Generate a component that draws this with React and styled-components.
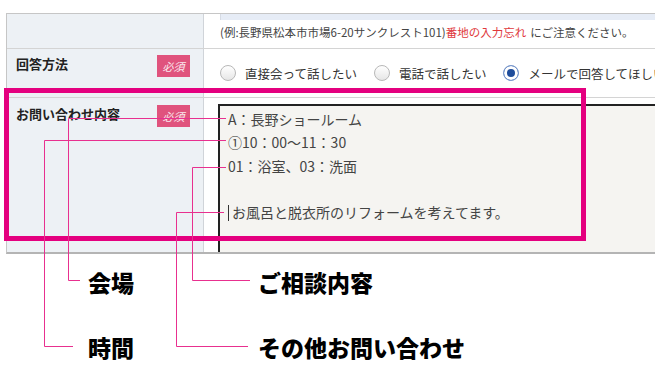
import React from "react";
import styled, { createGlobalStyle } from "styled-components";

const GlobalStyle = createGlobalStyle`
  body {
    margin: 0;
    background: #ffffff;
    font-family: "Noto Sans CJK JP", "Noto Sans", sans-serif;
  }
`;

const Page = styled.div`
  position: relative;
  width: 655px;
  height: 376px;
  overflow: hidden;
  box-sizing: border-box;
  padding: 13px 0 0 6px;
  background: #ffffff;
`;

const FormTable = styled.div`
  width: 680px;
  border-top: 1px solid #c6c6c6;
  border-left: 1px solid #c6c6c6;
  border-bottom: 2px solid #b4b4b4;
`;

const Row = styled.div`
  display: grid;
  grid-template-columns: 197px 1fr;
  height: ${(p) => p.$h}px;
  border-top: ${(p) => (p.$first ? "none" : "1px solid #d4d4d4")};
  overflow: hidden;
`;

const LabelCell = styled.div`
  box-sizing: border-box;
  display: flex;
  justify-content: space-between;
  align-items: flex-start;
  padding: ${(p) => p.$pt || 0}px 13px 0 9px;
  background: #edf1f5;
  border-right: 1px solid #d0d4d9;
`;

const LabelText = styled.span`
  font-size: 13px;
  line-height: 18px;
  font-weight: 700;
  color: #222;
`;

const Badge = styled.span`
  display: flex;
  align-items: center;
  justify-content: center;
  width: 33px;
  height: 22px;
  background: #e0537d;
  color: #fbe9ef;
  font-size: 11px;
  font-style: italic;
`;

const ValueCell = styled.div`
  display: flex;
  flex-direction: ${(p) => (p.$column ? "column" : "row")};
  align-items: ${(p) => (p.$center ? "center" : "flex-start")};
  padding-left: ${(p) => p.$pl || 16}px;
  padding-top: ${(p) => p.$pt || 0}px;
  background: #ffffff;
`;

const InputStub = styled.div`
  width: 100%;
  height: 6px;
  background: #e6ecf6;
  border-left: 1px solid #d6dbe4;
`;

const Note = styled.p`
  margin: 5px 0 0;
  font-size: 11.5px;
  line-height: 14px;
  color: #444;
  white-space: nowrap;
`;

const Warn = styled.span`
  color: #e0383c;
  margin-right: 4px;
`;

const Options = styled.div`
  display: flex;
  align-items: center;
  gap: 17px;
  white-space: nowrap;
`;

const Option = styled.label`
  display: flex;
  align-items: center;
  gap: 9px;
  font-size: 12.5px;
  color: #333;
`;

const Radio = styled.span`
  box-sizing: border-box;
  width: 16px;
  height: 16px;
  border-radius: 50%;
  border: 1px solid ${(p) => (p.$checked ? "#7d9bd0" : "#b8b8b8")};
  background: ${(p) =>
    p.$checked ? "#1f4d9c" : "linear-gradient(#ffffff, #e6e6e6)"};
  box-shadow: ${(p) => (p.$checked ? "inset 0 0 0 3px #ffffff" : "none")};
`;

const TextArea = styled.div`
  box-sizing: border-box;
  width: 100%;
  height: 220px;
  margin-top: 6px;
  padding: 2px 8px;
  border-top: 2px solid #222;
  border-left: 2px solid #222;
  background: #f5f4f1;
  font-size: 14px;
  line-height: 23.3px;
  color: #444;
  white-space: nowrap;
`;

const Line = styled.div`
  height: 23.3px;
`;

const Caret = styled.span`
  display: inline-block;
  width: 1px;
  height: 16px;
  margin-right: 3px;
  vertical-align: -3px;
  background: #333;
`;

const Callouts = styled.div`
  display: grid;
  grid-template-columns: 170px auto;
  row-gap: 35px;
  margin-top: 13px;
  padding-left: 82px;
`;

const Callout = styled.span`
  font-size: 23px;
  line-height: 30px;
  font-weight: 900;
  color: #000;
  white-space: nowrap;
`;

const Highlight = styled.div`
  position: absolute;
  left: 4px;
  top: 88px;
  width: 582px;
  height: 153px;
  box-sizing: border-box;
  border: 5px solid #e4007f;
  pointer-events: none;
`;

const Leaders = styled.svg`
  position: absolute;
  left: 0;
  top: 0;
  pointer-events: none;
`;

const leaders = [
  "M226 118.5 H68.5 V280.5 H80",
  "M226 140.5 H44.5 V346.5 H73",
  "M226 167.5 H192.5 V280.5 H250",
  "M224 212.5 H176.5 V346.5 H248",
];

export default function App() {
  return (
    <Page>
      <GlobalStyle />
      <FormTable>
        <Row $h={34} $first>
          <LabelCell />
          <ValueCell $column>
            <InputStub />
            <Note>
              (例:長野県松本市市場6-20サンクレスト101)<Warn>番地の入力忘れ</Warn>
              にご注意ください。
            </Note>
          </ValueCell>
        </Row>
        <Row $h={48}>
          <LabelCell $pt={6}>
            <LabelText>回答方法</LabelText>
            <Badge>必須</Badge>
          </LabelCell>
          <ValueCell $center>
            <Options>
              <Option>
                <Radio />
                直接会って話したい
              </Option>
              <Option>
                <Radio />
                電話で話したい
              </Option>
              <Option>
                <Radio $checked />
                メールで回答してほしい
              </Option>
            </Options>
          </ValueCell>
        </Row>
        <Row $h={154}>
          <LabelCell $pt={7}>
            <LabelText>お問い合わせ内容</LabelText>
            <Badge>必須</Badge>
          </LabelCell>
          <ValueCell $pl={14}>
            <TextArea>
              <Line>A：長野ショールーム</Line>
              <Line>①10：00～11：30</Line>
              <Line>01：浴室、03：洗面</Line>
              <Line />
              <Line>
                <Caret />
                お風呂と脱衣所のリフォームを考えてます。
              </Line>
            </TextArea>
          </ValueCell>
        </Row>
      </FormTable>
      <Callouts>
        <Callout>会場</Callout>
        <Callout>ご相談内容</Callout>
        <Callout>時間</Callout>
        <Callout>その他お問い合わせ</Callout>
      </Callouts>
      <Highlight />
      <Leaders width="655" height="376" viewBox="0 0 655 376">
        {leaders.map((d) => (
          <path key={d} d={d} fill="none" stroke="#e8308f" strokeWidth="1" />
        ))}
      </Leaders>
    </Page>
  );
}
